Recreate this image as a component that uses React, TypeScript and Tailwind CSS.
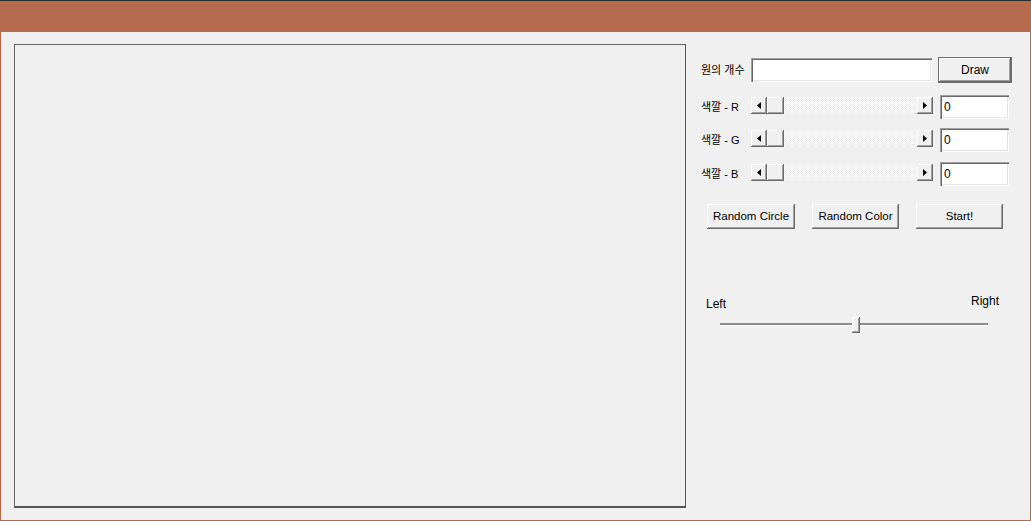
import React from "react";

const raised =
  "bg-[#f0f0f0] shadow-[inset_-1px_-1px_0_#696969,inset_1px_1px_0_#ffffff,inset_-2px_-2px_0_#a0a0a0]";
const sunken =
  "bg-white shadow-[inset_1px_1px_0_#a0a0a0,inset_2px_2px_0_#696969,inset_-1px_-1px_0_#ffffff,inset_-2px_-2px_0_#e3e3e3]";

const Arrow = ({ dir }: { dir: "left" | "right" }) => (
  <div className={`w-[16px] h-[17px] flex items-center justify-center ${raised}`}>
    <svg width="4" height="7" viewBox="0 0 4 7">
      {dir === "left" ? <path d="M4 0 L0 3.5 L4 7 Z" fill="#000" /> : <path d="M0 0 L4 3.5 L0 7 Z" fill="#000" />}
    </svg>
  </div>
);

const ScrollBar = () => (
  <div className="w-[182px] h-[17px] flex self-start mt-[2px]">
    <Arrow dir="left" />
    <div className={`w-[17px] h-[17px] ${raised}`} />
    <div className="flex-1 h-[17px] bg-[repeating-conic-gradient(#ffffff_0_25%,#ececec_0_50%)] bg-[length:2px_2px]" />
    <Arrow dir="right" />
  </div>
);

const ColorRow = ({ label, className }: { label: string; className: string }) => (
  <div className={`flex items-center h-[24px] ${className}`}>
    <span className="w-[50px] text-[11px]">{label}</span>
    <ScrollBar />
    <div className={`ml-[7px] w-[69px] h-[24px] pl-[4px] pt-[3px] text-[12px] ${sunken}`}>0</div>
  </div>
);

const Button = ({ label, w }: { label: string; w: string }) => (
  <button className={`${w} h-[25px] flex items-center justify-center text-[11.5px] text-black ${raised}`}>
    {label}
  </button>
);

export default function App() {
  return (
    <div className="w-[1031px] h-[521px] flex flex-col bg-[#b76b4e] font-['Liberation_Sans','Noto_Sans_CJK_KR',sans-serif] text-black">
      <div className="h-[32px] border-t border-[#2b2b2b]" />
      <div className="flex-1 mx-[1px] mb-[1px] bg-[#f0f0f0] flex items-start pt-[12px] pl-[13px]">
        <div className="w-[672px] h-[464px] border border-[#646464] border-b-2 border-b-[#555555] border-r-[#555555]" />

        <div className="ml-[15px] mt-[13px] flex flex-col">
          <div className="flex items-center h-[26px]">
            <span className="w-[50px] text-[11px]">원의 개수</span>
            <div className={`w-[181px] h-[24px] ${sunken}`} />
            <button className="ml-[6px] w-[74px] h-[26px] flex items-center justify-center text-[12px] border border-[#6d6d6d] bg-[#f0f0f0] shadow-[inset_-1px_-1px_0_#696969,inset_1px_1px_0_#ffffff,inset_-2px_-2px_0_#a0a0a0]">
              Draw
            </button>
          </div>

          <ColorRow label="색깔 - R" className="mt-[12px]" />
          <ColorRow label="색깔 - G" className="mt-[9px]" />
          <ColorRow label="색깔 - B" className="mt-[10px]" />

          <div className="flex gap-[17px] ml-[6px] mt-[18px]">
            <Button label="Random Circle" w="w-[88px]" />
            <Button label="Random Color" w="w-[87px]" />
            <Button label="Start!" w="w-[87px]" />
          </div>

          <div className="flex justify-between items-start ml-[5px] w-[293px] mt-[63px] text-[12px]">
            <span className="mt-[3px]">Left</span>
            <span>Right</span>
          </div>

          <div className="relative ml-[19px] mt-[4px] w-[268px] h-[16px]">
            <div className="mt-[6px] h-[3px] border-t-2 border-[#8c8c8c] border-b border-b-white" />
            <div className="absolute left-[132px] top-0 w-[8px] h-[16px] bg-[#f0f0f0] shadow-[inset_-1px_-1px_0_#696969,inset_1px_1px_0_#ffffff,inset_-2px_-2px_0_#a0a0a0]" />
          </div>
        </div>
      </div>
    </div>
  );
}
